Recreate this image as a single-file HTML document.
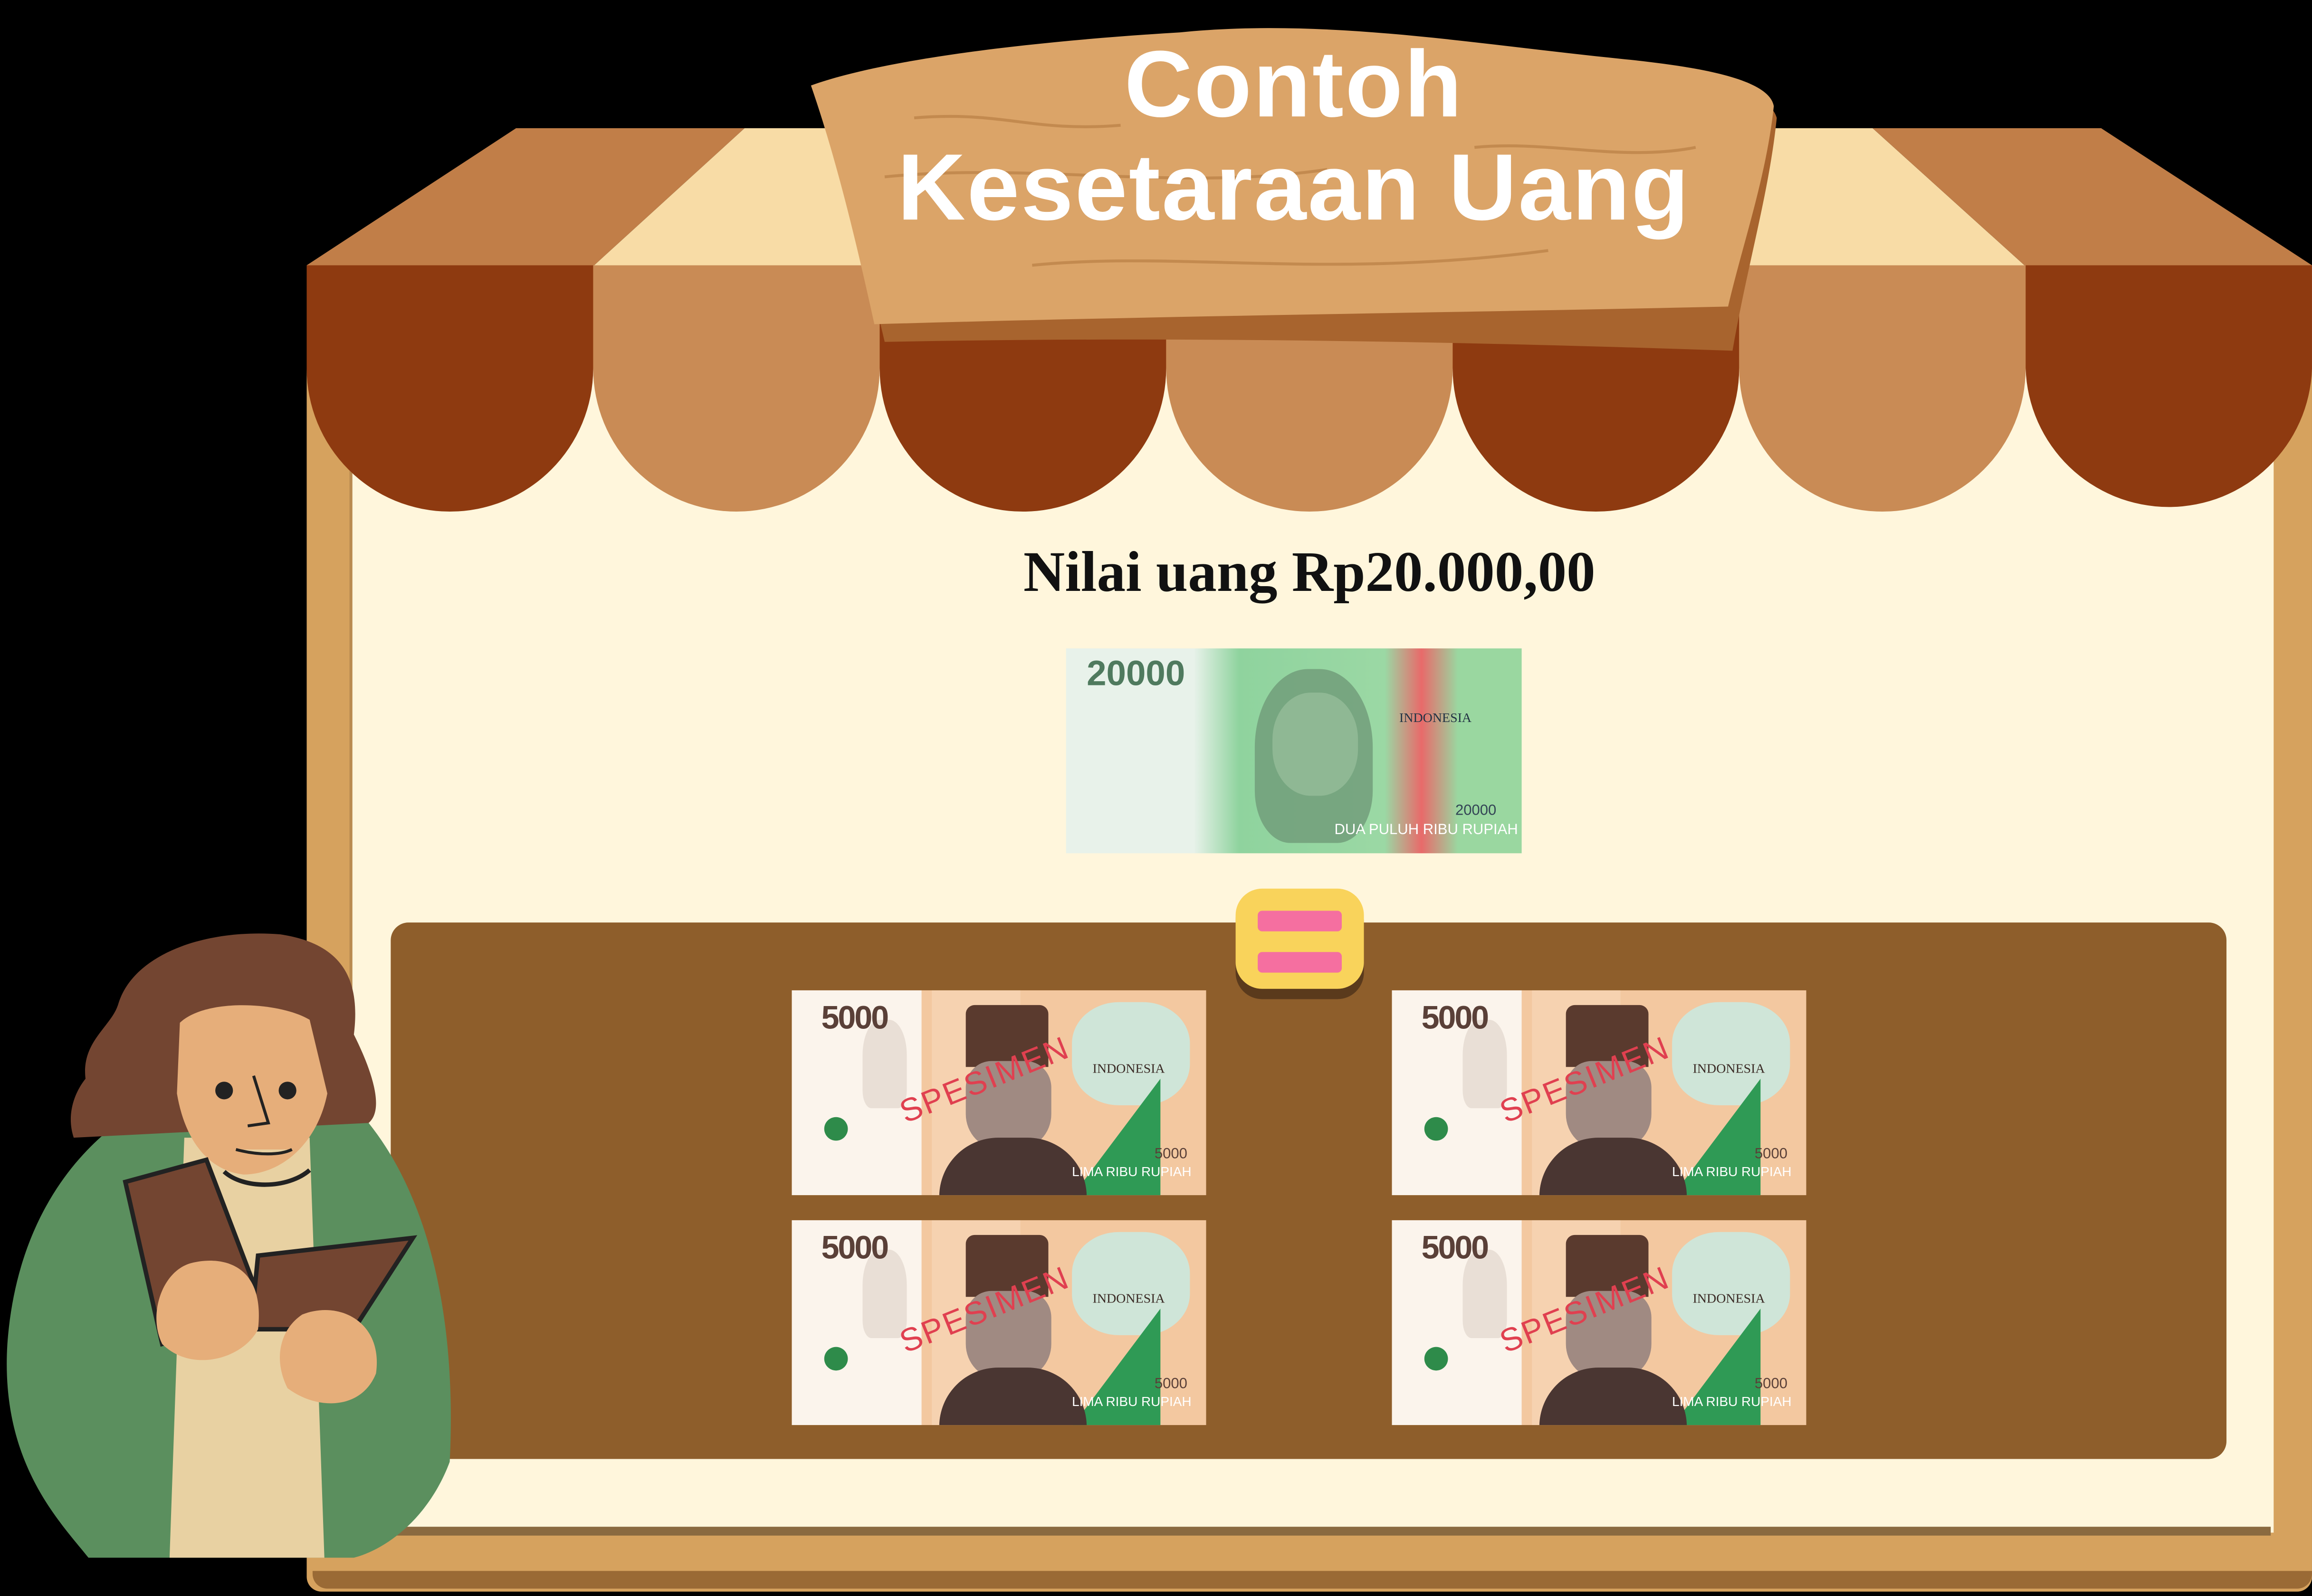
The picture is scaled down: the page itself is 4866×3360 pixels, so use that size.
<!DOCTYPE html>
<html><head><meta charset="utf-8"><style>
html,body{margin:0;padding:0;background:#000;overflow:hidden}
#s{position:absolute;left:0;top:0;width:1568px;height:1083px;transform:scale(3.1033,3.1025);transform-origin:0 0;background:#000;font-family:"Liberation Sans",sans-serif}
.a{position:absolute}
.n5{position:absolute;width:281px;height:139px;background:#F3C8A0;overflow:hidden}
.n5 .w{position:absolute;left:0;top:0;width:88px;height:139px;background:#FBF4EC}
.n5 .v{position:absolute;left:95px;top:0;width:60px;height:139px;background:#F6D2B0}
.n5 .t{position:absolute;left:20px;top:6px;font:bold 22px "Liberation Sans",sans-serif;color:#5a4038;letter-spacing:-1px}
.n5 .g{position:absolute;left:48px;top:20px;width:30px;height:60px;background:#e9dfd6;border-radius:40% 40% 20% 20%}
.n5 .hat{position:absolute;left:118px;top:10px;width:56px;height:42px;background:#5a3a2e;border-radius:6px 6px 0 0}
.n5 .face{position:absolute;left:118px;top:48px;width:58px;height:60px;background:#a08a82;border-radius:30% 30% 40% 40%}
.n5 .body{position:absolute;left:100px;top:100px;width:100px;height:40px;background:#4a3632;border-radius:40px 40px 0 0}
.n5 .gr{position:absolute;left:190px;top:60px;width:0;height:0;border-left:60px solid transparent;border-bottom:80px solid #2f9a55}
.n5 .bl{position:absolute;left:190px;top:8px;width:80px;height:70px;background:#cfe5d8;border-radius:40%}
.n5 .sp{position:absolute;left:70px;top:48px;font:22px "Liberation Sans",sans-serif;color:#e04050;transform:rotate(-22deg);letter-spacing:1px}
.n5 .ind{position:absolute;left:204px;top:48px;font:9px "Liberation Serif",serif;color:#3a2a25}
.n5 .lm{position:absolute;left:190px;top:118px;font:9px "Liberation Sans",sans-serif;color:#fff}
.n5 .sm{position:absolute;left:246px;top:106px;font:10px "Liberation Sans",sans-serif;color:#5a4038}
.n5 .fl{position:absolute;left:22px;top:86px;width:16px;height:16px;background:#2e8b4a;border-radius:50%}
</style></head><body><div id="s">

<div class="a" style="left:208px;top:180px;width:1360px;height:900px;background:#D6A25E;border-radius:0 0 10px 10px"></div>
<div class="a" style="left:212px;top:1066px;width:1356px;height:12px;background:#9a6a35;border-radius:0 0 10px 10px"></div>
<div class="a" style="left:237px;top:250px;width:1303px;height:790px;background:#FFF6DC;border-left:2px solid #b98a50"></div>
<div class="a" style="left:237px;top:1036px;width:1303px;height:6px;background:#8a6a40"></div>

<svg class="a" style="left:0;top:0" width="1568" height="360" viewBox="0 0 1568 360">
<polygon points="208,180 350,87 505,87 403,180" fill="#C17E48"/>
<polygon points="403,180 505,87 1270,87 1373,180" fill="#F8DCA6"/>
<polygon points="1373,180 1270,87 1425,87 1568,180" fill="#C17E48"/>
<path d="M208,180h194.3v70a97.15,97.15 0 0 1 -194.3,0z" fill="#8E3A10"/>
<path d="M402.3,180h194.3v70a97.15,97.15 0 0 1 -194.3,0z" fill="#C98B55"/>
<path d="M596.6,180h194.3v70a97.15,97.15 0 0 1 -194.3,0z" fill="#8E3A10"/>
<path d="M790.9,180h194.3v70a97.15,97.15 0 0 1 -194.3,0z" fill="#C98B55"/>
<path d="M985.2,180h194.3v70a97.15,97.15 0 0 1 -194.3,0z" fill="#8E3A10"/>
<path d="M1179.5,180h194.3v70a97.15,97.15 0 0 1 -194.3,0z" fill="#C98B55"/>
<path d="M1373.8,180h194.2v70a97.15,97.15 0 0 1 -194.2,0z" fill="#8E3A10"/>
<path d="M556,70 C600,50 700,35 800,30 C900,18 1000,40 1100,50 C1160,56 1200,62 1205,80 C1200,130 1185,180 1175,238 C1000,232 800,228 600,232 C590,190 575,120 556,70z" fill="#A8642E"/>
<path d="M550,58 C600,40 700,28 800,22 C900,12 1000,30 1100,40 C1160,46 1200,55 1203,72 C1198,120 1182,165 1172,208 C1000,212 800,214 593,220 C582,170 568,110 550,58z" fill="#DBA468"/>
<path d="M600,120 C700,110 800,130 900,115 M700,180 C800,170 900,190 1050,170 M620,80 C680,75 700,90 760,85 M1000,100 C1050,95 1100,110 1150,100" stroke="#c38a4f" stroke-width="2" fill="none"/>
</svg>
<div class="a" style="left:540px;top:22px;width:675px;text-align:center;color:#fff;font-weight:bold;font-size:64px;line-height:70px;letter-spacing:1px">Contoh<br>Kesetaraan Uang</div>

<div class="a" style="left:560px;top:366px;width:656px;text-align:center;font-size:39px;font-weight:bold;color:#111;font-family:'Liberation Serif',serif">Nilai uang Rp20.000,00</div>

<div class="a" style="left:723px;top:440px;width:309px;height:139px;background:linear-gradient(90deg,#e8f2ea 0%,#e8f2ea 28%,#8fd39e 38%,#9bd8a4 70%,#e86a6a 78%,#9ad7a0 86%);overflow:hidden">
<div class="a" style="left:14px;top:4px;font:bold 24px 'Liberation Sans',sans-serif;color:#4f7a5e">20000</div>
<div class="a" style="left:128px;top:14px;width:80px;height:118px;background:#6f9a78;border-radius:45% 45% 30% 30%;opacity:.8"></div>
<div class="a" style="left:140px;top:30px;width:58px;height:70px;background:#8fb894;border-radius:45%"></div>
<div class="a" style="left:226px;top:42px;font:9px 'Liberation Serif',serif;color:#234">INDONESIA</div>
<div class="a" style="left:182px;top:118px;font:10px 'Liberation Sans',sans-serif;color:#fff">DUA PULUH RIBU RUPIAH</div>
<div class="a" style="left:264px;top:105px;font:10px 'Liberation Sans',sans-serif;color:#345">20000</div>
</div>

<div class="a" style="left:265px;top:626px;width:1245px;height:364px;background:#8E5E2B;border-radius:12px"></div>

<div class="a" style="left:838px;top:606px;width:87px;height:72px;background:#5a3a1c;border-radius:18px"></div>
<div class="a" style="left:838px;top:603px;width:87px;height:68px;background:#F9D35B;border-radius:18px"></div>
<div class="a" style="left:853px;top:618px;width:57px;height:14px;background:#F56FA0;border-radius:3px"></div>
<div class="a" style="left:853px;top:646px;width:57px;height:14px;background:#F56FA0;border-radius:3px"></div>

<div class="n5" style="left:537px;top:672px"><div class="w"></div><div class="v"></div><div class="g"></div><div class="bl"></div><div class="gr"></div><div class="hat"></div><div class="face"></div><div class="body"></div><div class="fl"></div><div class="t">5000</div><div class="sp">SPESIMEN</div><div class="ind">INDONESIA</div><div class="lm">LIMA RIBU RUPIAH</div><div class="sm">5000</div></div>
<div class="n5" style="left:944px;top:672px"><div class="w"></div><div class="v"></div><div class="g"></div><div class="bl"></div><div class="gr"></div><div class="hat"></div><div class="face"></div><div class="body"></div><div class="fl"></div><div class="t">5000</div><div class="sp">SPESIMEN</div><div class="ind">INDONESIA</div><div class="lm">LIMA RIBU RUPIAH</div><div class="sm">5000</div></div>
<div class="n5" style="left:537px;top:828px"><div class="w"></div><div class="v"></div><div class="g"></div><div class="bl"></div><div class="gr"></div><div class="hat"></div><div class="face"></div><div class="body"></div><div class="fl"></div><div class="t">5000</div><div class="sp">SPESIMEN</div><div class="ind">INDONESIA</div><div class="lm">LIMA RIBU RUPIAH</div><div class="sm">5000</div></div>
<div class="n5" style="left:944px;top:828px"><div class="w"></div><div class="v"></div><div class="g"></div><div class="bl"></div><div class="gr"></div><div class="hat"></div><div class="face"></div><div class="body"></div><div class="fl"></div><div class="t">5000</div><div class="sp">SPESIMEN</div><div class="ind">INDONESIA</div><div class="lm">LIMA RIBU RUPIAH</div><div class="sm">5000</div></div>

<svg class="a" style="left:0;top:612px" width="322" height="471" viewBox="0 0 322 471">
<path d="M80,150 C110,130 200,125 250,150 C290,200 310,280 305,380 C290,420 260,440 240,445 L60,445 C40,420 0,380 5,300 C10,230 40,180 80,150z" fill="#5B8F5E"/>
<path d="M125,160 L210,160 L220,445 L115,445z" fill="#E8D1A2"/>
<path d="M58,120 C55,95 75,85 80,70 C90,35 140,18 190,22 C230,28 245,50 240,90 C250,110 262,140 250,150 L50,160 C45,145 50,130 58,120z" fill="#734531"/>
<path d="M122,82 C140,65 190,68 210,80 L222,130 C215,165 190,185 165,185 C140,182 125,160 120,130z" fill="#E6AE7A"/>
<circle cx="152" cy="128" r="6" fill="#222"/><circle cx="195" cy="128" r="6" fill="#222"/>
<path d="M152,183 C165,195 195,195 210,182" stroke="#222" stroke-width="3" fill="none"/>
<path d="M160,168 C175,172 190,172 198,168" stroke="#222" stroke-width="2" fill="#E8D1A2"/>
<path d="M172,118 L182,150 L168,152" stroke="#222" stroke-width="2" fill="none"/>
<path d="M85,190 L140,175 L180,280 L110,300z" fill="#734531" stroke="#222" stroke-width="3"/>
<path d="M175,240 L280,228 L240,290 L170,290z" fill="#734531" stroke="#222" stroke-width="3"/>
<path d="M130,245 C150,240 180,245 175,290 C165,310 130,320 110,300 C100,280 110,250 130,245z" fill="#E6AE7A"/>
<path d="M205,280 C230,270 260,285 255,320 C245,345 215,345 195,330 C185,310 190,290 205,280z" fill="#E6AE7A"/>
</svg>

</div></body></html>
